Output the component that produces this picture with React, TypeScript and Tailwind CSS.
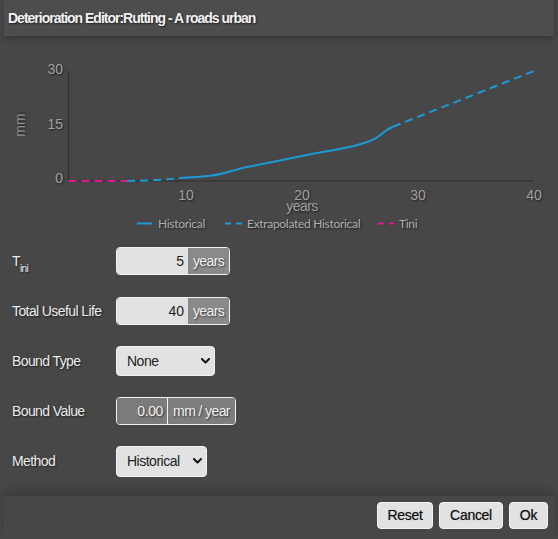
import React from "react";

const ts = "[text-shadow:1px_1px_2px_rgba(0,0,0,0.6)]";

function Chevron() {
  return (
    <svg width="9" height="6" viewBox="0 0 9 6" className="block">
      <path d="M1 1 L4.5 4.6 L8 1" fill="none" stroke="#111" strokeWidth="2" strokeLinecap="round" strokeLinejoin="round" />
    </svg>
  );
}

function Row({ label, children }: { label: React.ReactNode; children: React.ReactNode }) {
  return (
    <div className="h-[50px] flex items-center">
      <div className={`w-[116px] pl-[12px] text-[14px] tracking-[-0.6px] text-[#ececec] ${ts}`}>{label}</div>
      {children}
    </div>
  );
}

function UnitInput({ value, unit, w }: { value: string; unit: string; w: string }) {
  return (
    <div className={`flex h-[28px] border border-[#f2f2f2] rounded-[4px] overflow-hidden w-[114px]`}>
      <div className={`${w} bg-[#e2e2e2] flex items-center justify-end pr-[4px] text-[14px] text-[#222]`}>{value}</div>
      <div className={`flex-1 bg-[#8a8a8a] flex items-center justify-center text-[14px] tracking-[-0.6px] text-[#f2f2f2] ${ts}`}>{unit}</div>
    </div>
  );
}

function Select({ text, w, h }: { text: string; w: string; h: string }) {
  return (
    <div className={`${w} ${h} bg-[#e2e2e2] border border-[#f2f2f2] rounded-[4px] flex items-center justify-between pl-[10px] pr-[4px] text-[14px] tracking-[-0.5px] text-[#222]`}>
      <span>{text}</span>
      <Chevron />
    </div>
  );
}

function Chart() {
  const hist =
    "M183,177.7 C190,177.4 200,176.8 210,175.7 C218,174.7 222,173.7 225,172.7 C232,170.8 236,169.9 240,168.6 C246,167.2 249,166.6 253,166 C262,164 270,162.4 280,160.5 C290,158.4 300,156.3 313,153.7 C325,151.4 335,149.9 347,147.4 C354,145.9 360,144.5 365,142.7 C371,140.6 375,139 378,136.7 C382,134 384,131.8 387,130 C389,128.8 391,127.5 393,126.7";
  return (
    <svg width="558" height="200" viewBox="0 36 558 200" className="block" style={{ fontFamily: '"Liberation Sans", Arial, sans-serif' }}>
      <line x1="68.5" y1="71" x2="68.5" y2="181" stroke="#2e2e2e" strokeWidth="1.2" />
      <line x1="68" y1="181" x2="534" y2="181" stroke="#2e2e2e" strokeWidth="1.2" />
      <g fill="#a0a0a0" fontSize="14" className={ts}>
        <text x="63" y="74" textAnchor="end">30</text>
        <text x="63" y="129" textAnchor="end">15</text>
        <text x="63" y="183" textAnchor="end">0</text>
        <text x="186" y="200" textAnchor="middle">10</text>
        <text x="302" y="200" textAnchor="middle">20</text>
        <text x="418" y="200" textAnchor="middle">30</text>
        <text x="534" y="200" textAnchor="middle">40</text>
        <text x="302" y="211" textAnchor="middle" letterSpacing="-0.5">years</text>
        <text x="25" y="125" textAnchor="middle" transform="rotate(-90 25 125)" fill="#8f8f8f">mm</text>
      </g>
      <path d="M68.5,181 L127,181" stroke="#e0168f" strokeWidth="2" strokeDasharray="8 5" fill="none" />
      <path d="M127,181 C150,180.6 168,179.6 183,177.7" stroke="#1b9ad6" strokeWidth="2" strokeDasharray="8 5" fill="none" />
      <path d={hist} stroke="#1b9ad6" strokeWidth="2" fill="none" />
      <path d="M393,126.7 L534,71" stroke="#1b9ad6" strokeWidth="2" strokeDasharray="8 5" fill="none" />
      <g fontSize="12" fill="#b0b0b0" style={{ fontFamily: 'Lato, "Liberation Sans", sans-serif' }} className={ts}>
        <line x1="137" y1="223.5" x2="152" y2="223.5" stroke="#1b9ad6" strokeWidth="2" />
        <text x="158" y="227.5" letterSpacing="-0.3">Historical</text>
        <line x1="225" y1="223.5" x2="243" y2="223.5" stroke="#1b9ad6" strokeWidth="2" strokeDasharray="6 5" />
        <text x="247" y="227.5" letterSpacing="-0.3">Extrapolated Historical</text>
        <line x1="378" y1="223.5" x2="394" y2="223.5" stroke="#e0168f" strokeWidth="2" strokeDasharray="6 5" />
        <text x="399" y="227.5" letterSpacing="-0.3">Tini</text>
      </g>
    </svg>
  );
}

export default function App() {
  const buttons: [string, string][] = [
    ["Reset", "w-[56px]"],
    ["Cancel", "w-[64px]"],
    ["Ok", "w-[39px]"],
  ];
  return (
    <div className="w-[558px] h-[539px] bg-[#474747] flex flex-col overflow-hidden" style={{ fontFamily: '"Liberation Sans", Arial, sans-serif' }}>
      <div className="mx-[4px] h-[36px] shrink-0 bg-[#4d4d4d] shadow-[0_4px_6px_rgba(0,0,0,0.18)] flex items-center pl-[4px] relative z-10">
        <span className={`text-[14px] font-bold tracking-[-1px] text-[#f2f2f2] ${ts}`}>Deterioration Editor:Rutting - A roads urban</span>
      </div>
      <Chart />
      <div className="flex flex-col">
        <Row label={<span>T<sub className="text-[10px] tracking-[-0.6px] align-[-4px]">ini</sub></span>}>
          <UnitInput value="5" unit="years" w="w-[71px]" />
        </Row>
        <Row label="Total Useful Life">
          <UnitInput value="40" unit="years" w="w-[71px]" />
        </Row>
        <Row label="Bound Type">
          <Select text="None" w="w-[99px]" h="h-[30px]" />
        </Row>
        <Row label="Bound Value">
          <div className="flex h-[28px] border border-[#f2f2f2] rounded-[4px] overflow-hidden w-[120px]">
            <div className={`w-[51px] bg-[#7b7b7b] flex items-center justify-end pr-[4px] text-[14px] tracking-[-0.4px] text-[#f0f0f0] border-r border-[#f2f2f2] ${ts}`}>0.00</div>
            <div className={`flex-1 bg-[#7e7e7e] flex items-center justify-center text-[14px] tracking-[-0.6px] text-[#f0f0f0] ${ts}`}>mm / year</div>
          </div>
        </Row>
        <Row label="Method">
          <Select text="Historical" w="w-[91px]" h="h-[31px]" />
        </Row>
      </div>
      <div className="mt-auto mx-[4px] h-[43px] shrink-0 bg-[#474747] shadow-[0_-6px_8px_rgba(0,0,0,0.16)] flex justify-end items-start pt-[6px] pr-[6px] gap-[6px]">
        {buttons.map(([b, w]) => (
          <div key={b} className={`${w} h-[27px] bg-[#e2e2e2] border border-[#f4f4f4] rounded-[4px] flex items-center justify-center text-[14px] tracking-[-0.3px] text-[#111] [text-shadow:0_0_1px_rgba(0,0,0,0.45)]`}>
            {b}
          </div>
        ))}
      </div>
    </div>
  );
}
